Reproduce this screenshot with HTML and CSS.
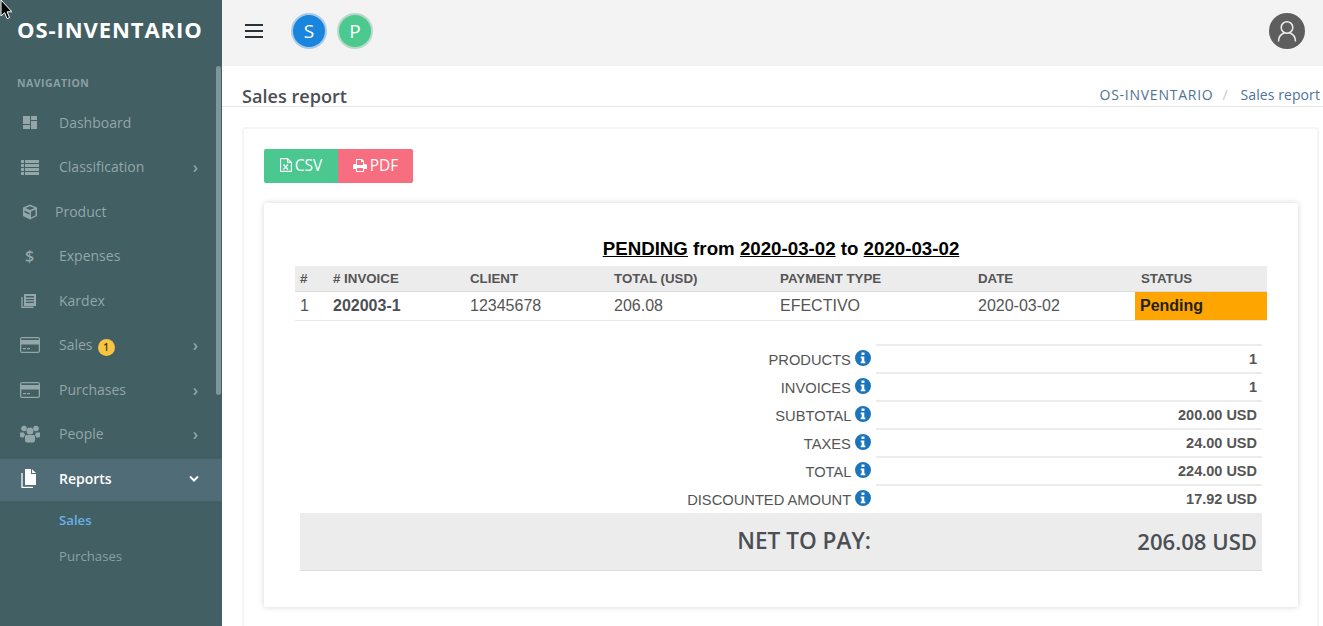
FILE: index.html
```html
<!DOCTYPE html>
<html lang="en">
<head>
<meta charset="utf-8">
<title>Sales report</title>
<link rel="stylesheet" href="styles.css">
</head>
<body>
<svg class="cursor" width="12" height="20" viewBox="0 0 12 20"><path d="M1 0v16l3.600-3.400 2.400 6 2.600-1-2.500-5.800H12z" fill="#000" stroke="#fff" stroke-width="1"/></svg>
<div class="app">
  <aside class="sidebar">
    <div class="logo">OS-INVENTARIO</div>
    <div class="nav-title">NAVIGATION</div>
    <nav class="nav">
      <a class="item"><span class="ico"><svg width="18" height="15" viewBox="-2 0 18 15"><path fill="currentColor" d="M1 1h7v8H1zM9 1h6v4H9zM9 6h6v8H9zM1 10h7v4H1z"/></svg></span><span class="label">Dashboard</span></a>
      <a class="item"><span class="ico"><svg width="20" height="17" viewBox="0 0 20 17"><path fill="currentColor" d="M1 1h3v3H1zM5 1h14v3H5zM1 5h3v3H1zM5 5h14v3H5zM1 9h3v3H1zM5 9h14v3H5zM1 13h3v3H1zM5 13h14v3H5z"/></svg></span><span class="label">Classification</span><span class="chev">›</span></a>
      <a class="item item-tight"><span class="ico"><svg width="16" height="16" viewBox="0 0 16 16"><path fill="currentColor" fill-rule="evenodd" d="M8 .5l7 3v8.500l-7 3.500-7-3.500V3.500zM3.500 4L8 6l4.500-2L8 2.200zM9 7.500v6l4.500-2.300V5.500zM2.500 6.500v1.800l5 2.400V9z"/></svg></span><span class="label">Product</span></a>
      <a class="item"><span class="ico ico-dollar">$</span><span class="label">Expenses</span></a>
      <a class="item"><span class="ico"><svg width="17" height="16" viewBox="-1 0 17 16"><path fill="currentColor" fill-rule="evenodd" d="M3 1h12v12H3zM5 3v1.500h8V3zM5 6v1.300h8V6zM5 8.700V10h8V8.700z"/><path fill="none" stroke="currentColor" stroke-width="1.400" d="M1 4v10.300h11.500"/></svg></span><span class="label">Kardex</span></a>
      <a class="item"><span class="ico"><svg width="20" height="16" viewBox="0 0 20 16"><path fill="currentColor" fill-rule="evenodd" d="M2 0h16a2 2 0 0 1 2 2v12a2 2 0 0 1-2 2H2a2 2 0 0 1-2-2V2a2 2 0 0 1 2-2zM1.300 1.300v1.700h17.400V1.300zM1.300 7.500v7.200h17.400V7.500zM3 11h3v1.200H3zM7 11h3v1.200H7z"/></svg></span><span class="label">Sales</span><span class="badge">1</span><span class="chev">›</span></a>
      <a class="item"><span class="ico"><svg width="20" height="16" viewBox="0 0 20 16"><path fill="currentColor" fill-rule="evenodd" d="M2 0h16a2 2 0 0 1 2 2v12a2 2 0 0 1-2 2H2a2 2 0 0 1-2-2V2a2 2 0 0 1 2-2zM1.300 1.300v1.700h17.400V1.300zM1.300 7.500v7.200h17.400V7.500zM3 11h3v1.200H3zM7 11h3v1.200H7z"/></svg></span><span class="label">Purchases</span><span class="chev">›</span></a>
      <a class="item"><span class="ico"><svg width="20" height="18" viewBox="0 0 20 18"><g fill="currentColor"><circle cx="4" cy="3.500" r="2.800"/><circle cx="16" cy="3.500" r="2.800"/><circle cx="10" cy="6" r="3.500"/><path d="M0 7.500h4l1 2.500-1.500 2.500H1.500Q0 12.500 0 11zM20 7.500h-4l-1 2.500 1.500 2.500h2Q20 12.500 20 11zM5 11.500q0-1.500 1.500-1.500h7q1.500 0 1.500 1.500v4q0 2-2 2H7q-2 0-2-2z"/></g></svg></span><span class="label">People</span><span class="chev">›</span></a>
      <a class="item item-active"><span class="ico"><svg width="17" height="19" viewBox="-1 0 17 19"><path fill="currentColor" d="M4 0h6v5h5v11H4z"/><path fill="currentColor" d="M11 .3L15 4h-4z"/><path fill="none" stroke="currentColor" stroke-width="1.300" d="M1 4v14.300h11"/></svg></span><span class="label">Reports</span><svg class="chev-down" width="10" height="7" viewBox="0 0 10 7"><path d="M1 1.500l4 4 4-4" fill="none" stroke="currentColor" stroke-width="2"/></svg></a>
    </nav>
    <div class="subnav">
      <a class="subitem subitem-on">Sales</a>
      <a class="subitem">Purchases</a>
    </div>
    <div class="scroll-thumb"></div>
  </aside>
  <main class="main">
    <header class="topbar">
      <div class="burger"><i></i><i></i><i></i></div>
      <span class="pill pill-blue">S</span>
      <span class="pill pill-green">P</span>
      <span class="avatar"><svg width="24" height="24" viewBox="0 0 24 24"><g fill="none" stroke="#eee" stroke-width="1.500"><circle cx="12" cy="8.500" r="5.800"/><path d="M3.500 22.500c0-4.500 3-7.500 5.500-8.500M20.500 22.500c0-4.500-3-7.500-5.500-8.500"/></g></svg></span>
    </header>
    <div class="titlebar">
      <h1 class="page-title">Sales report</h1>
      <div class="crumbs"><a class="crumb-root">OS-INVENTARIO</a><span class="sep">/</span><a class="crumb-leaf">Sales report</a></div>
    </div>
    <section class="card">
      <div class="actions">
        <a class="btn btn-csv"><svg width="12" height="14" viewBox="0 0 12 14"><path d="M.6.6h7l3.800 3.800v9H.6z M7.600.6v3.800h3.800" fill="none" stroke="#fff" stroke-width="1.100"/><path d="M3.500 6.500l4.500 5M8 6.500l-4.500 5" stroke="#fff" stroke-width="1.300"/></svg>CSV</a>
        <a class="btn btn-pdf"><svg width="14" height="13" viewBox="0 0 14 13"><path fill="#fff" fill-rule="evenodd" d="M3 0h6l2 2v3h1.500Q14 5 14 6.500V10h-3v3H3v-3H0V6.500Q0 5 1.500 5H3zM4 1v5h6V3H8V1zM4 9v3h6V9z"/></svg>PDF</a>
      </div>
      <div class="report">
        <h2 class="report-title"><u>PENDING</u> from <u>2020-03-02</u> to <u>2020-03-02</u></h2>
        <table class="sales">
          <colgroup><col class="c1"><col class="c2"><col class="c3"><col class="c4"><col class="c5"><col class="c6"><col class="c7"></colgroup>
          <thead>
            <tr><th>#</th><th># INVOICE</th><th>CLIENT</th><th>TOTAL (USD)</th><th>PAYMENT TYPE</th><th>DATE</th><th class="th-status">STATUS</th></tr>
          </thead>
          <tbody>
            <tr><td>1</td><td><b>202003-1</b></td><td>12345678</td><td>206.08</td><td>EFECTIVO</td><td>2020-03-02</td><td class="status">Pending</td></tr>
          </tbody>
        </table>
        <table class="summary">
          <tbody>
            <tr><th>PRODUCTS <svg class="info" width="16" height="16" viewBox="0 0 16 16"><use href="#i"/></svg></th><td>1</td></tr>
            <tr><th>INVOICES <svg class="info" width="16" height="16" viewBox="0 0 16 16"><use href="#i"/></svg></th><td>1</td></tr>
            <tr><th>SUBTOTAL <svg class="info" width="16" height="16" viewBox="0 0 16 16"><use href="#i"/></svg></th><td>200.00 USD</td></tr>
            <tr><th>TAXES <svg class="info" width="16" height="16" viewBox="0 0 16 16"><use href="#i"/></svg></th><td>24.00 USD</td></tr>
            <tr><th>TOTAL <svg class="info" width="16" height="16" viewBox="0 0 16 16"><use href="#i"/></svg></th><td>224.00 USD</td></tr>
            <tr><th>DISCOUNTED AMOUNT <svg class="info" width="16" height="16" viewBox="0 0 16 16"><use href="#i"/></svg></th><td>17.92 USD</td></tr>
            <tr class="net"><th>NET TO PAY:</th><td>206.08 USD</td></tr>
          </tbody>
        </table>
      </div>
    </section>
  </main>
</div>
<svg class="defs" width="0" height="0"><symbol id="i" viewBox="0 0 16 16"><path fill="#1b75bc" fill-rule="evenodd" d="M8 0a8 8 0 1 1 0 16A8 8 0 0 1 8 0zM6.500 2.600v2.500h3V2.600zM5.700 6.600v1.700h1v3.100h-1v1.800h4.600v-1.800h-1V6.600z"/></symbol></svg>
</body>
</html>
```
FILE: styles.css
```css
* { box-sizing: border-box; }
html, body { margin: 0; height: 100%; overflow: hidden; background: #fff; }
body { font-family: "Open Sans", "Liberation Sans", sans-serif; color: #4b4f54; }
.defs { position: absolute; }
.cursor { position: absolute; left: 0; top: 0; z-index: 10; }
.app { display: flex; height: 626px; overflow: hidden; }

/* sidebar */
.sidebar { position: relative; width: 222px; flex: none; background: #425f63; color: #93a6a9; overflow: hidden; }
.logo { padding: 14px 0 0 17px; height: 76px; font-size: 22px; line-height: 31px; font-weight: 700; letter-spacing: .92px; color: #fff; }
.nav-title { padding-left: 17px; height: 26.500px; font-size: 10.500px; line-height: 15px; font-weight: 700; letter-spacing: .5px; color: #8ba0a3; }
.nav { display: flex; flex-direction: column; gap: 2.500px; }
.item { display: flex; align-items: center; height: 42px; padding: 0 24px 1.800px 20px; font-size: 14px; }
.ico { width: 39px; flex: none; display: flex; align-items: center; }
.item-tight .ico { width: 35px; padding-left: 2px; }
.ico-dollar { font-size: 16px; font-weight: 600; padding-left: 5px; }
.label { line-height: 20px; }
.chev { margin-left: auto; font-size: 16px; line-height: 20px; font-weight: 600; }
.chev-down { margin-left: auto; color: #fff; margin-right: -1px; }
.badge { display: flex; align-items: center; justify-content: center; width: 17px; height: 17px; margin: 4px 0 0 5px; border-radius: 50%; background: #f9c440; color: #333; font-size: 10px; font-weight: 600; }
.item-active { background: #4f6c77; color: #fff; font-weight: 600; }
.subnav { display: flex; flex-direction: column; padding-top: 1px; }
.subitem { height: 36px; padding-left: 59px; font-size: 13.200px; line-height: 36px; color: #8ba0a3; }
.subitem-on { color: #69b0ea; font-weight: 600; }
.scroll-thumb { position: absolute; left: 216px; top: 66px; width: 5px; height: 329px; border-radius: 3px; background: #7f9699; }

/* main */
.main { flex: 1; min-width: 0; }
.topbar { display: flex; align-items: center; height: 66px; padding: 0 18px 4px 23px; background: #f3f3f3; }
.burger { display: flex; flex-direction: column; gap: 4px; width: 18px; margin-right: 30px; }
.burger i { display: block; height: 2px; background: #2b3138; }
.pill { display: flex; align-items: center; justify-content: center; width: 32px; height: 32px; margin-right: 14px; border-radius: 50%; color: #fff; font-size: 19px; }
.pill-blue { background: #1a85dd; box-shadow: 0 0 0 2px #a9cbe6; }
.pill-green { background: #4bc98f; box-shadow: 0 0 0 2px #b8d8c9; }
.avatar { display: flex; align-items: center; justify-content: center; width: 36px; height: 36px; margin-left: auto; border-radius: 50%; background: #5e5e5e; }
.titlebar { display: flex; justify-content: space-between; align-items: flex-end; height: 41px; padding: 0 3px 0 20px; border-bottom: 1px solid #e6e6e6; }
.page-title { margin: 0; font-size: 18.100px; line-height: 24px; font-weight: 600; color: #4b4f54; position: relative; top: 2px; }
.crumbs { display: flex; font-size: 14px; line-height: 20px; color: #4f7396; padding-bottom: 1px; }
.crumb-root { letter-spacing: .75px; }
.crumb-leaf { letter-spacing: .08px; }
.sep { margin: 0 13px 0 9px; color: #c3c9ce; }

.card { margin: 20px 4px 0 20px; padding: 20px; height: 560px; border: 2px solid #f5f5f5; border-radius: 4px; }
.actions { display: flex; }
.btn { display: flex; align-items: center; justify-content: center; gap: 3px; height: 34px; padding-bottom: 2px; font-size: 15.500px; color: #fff; }
.btn-csv { width: 74px; background: #4ac88f; border-radius: 2px 0 0 2px; }
.btn-pdf { width: 75px; background: #f66e7f; border-radius: 0 2px 2px 0; }

.report { margin-top: 20px; width: 1034px; height: 404px; padding: 36px 31px 0; background: #fff; box-shadow: 0 0 6px rgba(0, 0, 0, .16); font-family: "Liberation Sans", Arial, sans-serif; border-radius: 2px; }
.report-title { margin: 0; height: 27px; text-align: center; font-size: 18.720px; line-height: 20px; font-weight: 700; color: #000; }
table { border-collapse: collapse; }
.sales { width: 972px; table-layout: fixed; }
.c1 { width: 33px; } .c2 { width: 137px; } .c3 { width: 144px; } .c4 { width: 166px; } .c5 { width: 198px; } .c6 { width: 162px; } .c7 { width: 132px; }
.sales th { height: 25px; padding: 0 5px; background: #ececec; text-align: left; font-size: 13.300px; font-weight: 700; color: #555; border-bottom: 1px solid #dcdcdc; }
.sales th.th-status { padding-left: 6px; }
.sales td { height: 29px; padding: 0 5px; font-size: 16px; color: #555; border-bottom: 1px solid #e6e6e6; }
.sales td b { color: #4b4f54; }
.sales td.status { background: #ffa500; color: #222; font-weight: 700; }
.summary { width: 962px; margin: 23px 0 0 5px; table-layout: fixed; }
.summary th { width: 576px; height: 28px; padding: 0 5px 0 0; text-align: right; font-size: 14.700px; font-weight: 400; color: #555; white-space: nowrap; }
.summary td { height: 28px; padding: 0 5px; text-align: right; font-size: 14.500px; font-weight: 700; color: #555; border-top: 2px solid #ececec; }
.info { vertical-align: -1px; }
.summary .net th, .summary .net td { height: 58px; background: #ececec; border-top: 0; border-bottom: 1px solid #dcdcdc; font-family: "Open Sans", sans-serif; font-weight: 600; color: #4b4f54; }
.summary .net th { padding-bottom: 2px; font-size: 22.600px; }
.summary .net td { font-size: 22.100px; }
```
